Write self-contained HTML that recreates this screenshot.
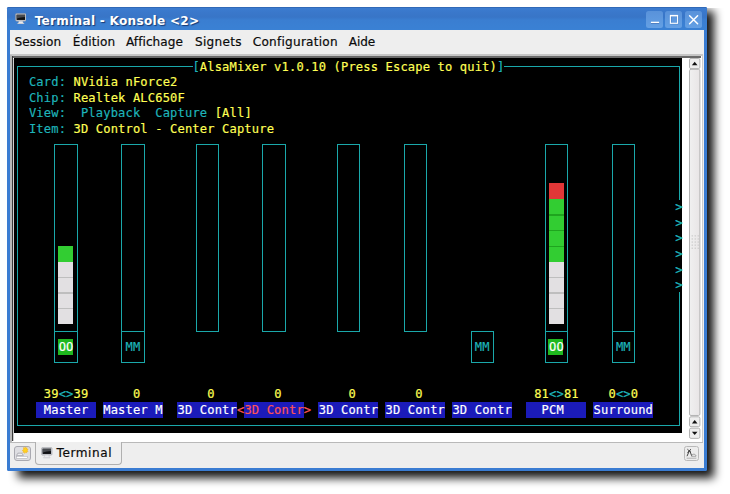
<!DOCTYPE html>
<html><head><meta charset="utf-8"><title>Terminal - Konsole</title>
<style>
html,body{margin:0;padding:0;background:#fff;}
body{width:730px;height:494px;position:relative;overflow:hidden;font-family:"DejaVu Sans","Liberation Sans",sans-serif;}
div,span,svg{position:absolute;}
#win{left:7.2px;top:7.2px;width:699.6px;height:463.5px;background:#3a7cd2;border-radius:1.5px;}
#title{left:7.2px;top:7.2px;width:699.6px;height:22.6px;background:linear-gradient(#2a5ea8 0,#3c7cd0 1.3px,#3a78cb 5px,#3875c7 10px,#3a7ed1 13px,#3a81d4 100%);border-radius:1.5px 1.5px 0 0;}
.tt{left:34.7px;top:12.7px;font-weight:bold;font-size:12.08px;color:#fff;text-shadow:1px 1px 1px rgba(0,10,50,.6);white-space:pre;line-height:16px;letter-spacing:0.28px}
.wb{top:10.9px;width:17px;height:17px;background:linear-gradient(#5992da,#64a0e4);border-radius:2.5px;}
#menu{left:10px;top:29.7px;width:693.6px;height:438.1px;background:#eeeeee;}
.mi span{top:33.7px;font-size:12.08px;color:#0a0a0a;-webkit-text-stroke:0.2px;line-height:16px;white-space:pre}
#black{left:14.04px;top:58.4px;width:668.4px;height:374.2px;background:#000;}
.ln{background:#1aa8aa;}
.t{font-family:"DejaVu Sans Mono","Liberation Mono",monospace;font-size:12.08px;letter-spacing:0.157px;line-height:15.61px;height:15.61px;white-space:pre;-webkit-text-stroke:0.18px;}
.blk{box-shadow:inset 0 -1px 0 rgba(0,0,0,.10);}
.sbb{left:689.3px;width:11.2px;background:#eeeeee;border:1px solid #b4b4b4;border-radius:2px;box-sizing:border-box;}
</style></head><body>
<div style="left:7.5px;top:7.5px;width:722.5px;height:486.5px;overflow:hidden"><div style="left:10.5px;top:3.5px;width:696px;height:467px;background:rgba(0,0,0,.92);filter:blur(5px)"></div></div>
<div id="win"></div>
<div id="title"></div>
<svg style="position:absolute;left:14.6px;top:12.8px" width="11.6" height="11.6" viewBox="0 0 22 22">
<rect x="1" y="1" width="20" height="14.5" rx="2" fill="#c9cbd0" stroke="#8d9097" stroke-width="0.8"/>
<rect x="3" y="3.2" width="16" height="10" fill="#101114"/>
<path d="M3 3.2h16v4.5c-5 .3-11 1.3-16 3z" fill="#5a5d63" opacity=".75"/>
<path d="M7.5 15.5h7l1.5 4.3h-10z" fill="#f2f2f4" stroke="#b4b6bc" stroke-width=".6"/>
<rect x="4.5" y="19.3" width="13" height="1.8" rx=".9" fill="#e3e4e8" stroke="#b4b6bc" stroke-width=".5"/>
</svg>
<span class="tt">Terminal - Konsole &lt;2&gt;</span>
<div class="wb" style="left:645.9px"></div><div class="wb" style="left:665.3px"></div><div class="wb" style="left:684.8px"></div>
<svg style="left:645.9px;top:10.9px" width="56" height="17" viewBox="0 0 56 17">
 <path d="M5 12.3h8.2" stroke="#1d4f9a" stroke-width="1.3" opacity=".55"/>
 <path d="M4.9 11.4h8.2" stroke="#fff" stroke-width="1.4"/>
 <rect x="24.9" y="5.2" width="7.2" height="7.6" fill="none" stroke="#1d4f9a" stroke-width="1" opacity=".45"/>
 <rect x="24.4" y="4.7" width="7.2" height="7.6" fill="none" stroke="#fff" stroke-width="1.1"/>
 <path d="M24 4.6h8" stroke="#fff" stroke-width="1.4"/>
 <path d="M43.6 4.8l8 8M51.6 4.8l-8 8" stroke="#fff" stroke-width="1.5" stroke-linecap="round"/>
</svg>
<div id="menu"></div>
<div class="mi"><span style="left:14.5px;letter-spacing:0.08px">Session</span><span style="left:72.8px;letter-spacing:0.1px">Édition</span><span style="left:125.9px;letter-spacing:0.08px">Affichage</span><span style="left:195.0px;letter-spacing:0.3px">Signets</span><span style="left:252.8px;letter-spacing:0.24px">Configuration</span><span style="left:348.8px;letter-spacing:-0.07px">Aide</span></div>
<!-- terminal frame -->
<div style="left:10px;top:54.1px;width:693.4px;height:2.1px;background:#c6c6c6"></div>
<div style="left:10px;top:55px;width:1.85px;height:386.6px;background:#b8b8b8"></div>
<div style="left:11.85px;top:56.2px;width:691px;height:385.6px;background:#fff"></div>
<div style="left:11.85px;top:56.2px;width:689px;height:2.2px;background:#6a6a6a"></div>
<div style="left:11.85px;top:56.2px;width:1.1px;height:384.6px;background:#3a3a3a"></div>
<div style="left:10px;top:441.6px;width:693.4px;height:1px;background:#b9b9b9"></div>
<div style="left:12.95px;top:58.7px;width:1.1px;height:382px;background:#cfcfcf"></div>
<div id="black"></div>
<!-- scrollbar -->
<svg style="left:688.3px;top:58.3px" width="13.4" height="382" viewBox="-1 0 13.4 382">
 <defs><linearGradient id="sg" x1="0" x2="1" y1="0" y2="0"><stop offset="0" stop-color="#f0f0f0"/><stop offset="1" stop-color="#e8e5e6"/></linearGradient></defs>
 <g stroke="#b2b2b2" stroke-width="1">
 <rect x="0.5" y="0.3" width="10.4" height="10.2" rx="1.5" fill="#eee"/>
 <rect x="0.5" y="11.2" width="10.4" height="346.4" rx="1.5" fill="url(#sg)"/>
 <rect x="0.5" y="358.9" width="10.4" height="9.9" rx="1.5" fill="#eee"/>
 <rect x="0.5" y="370.3" width="10.4" height="10.2" rx="1.5" fill="#eee"/>
 </g>
 <path d="M2.9 7.0l2.8-3.4 2.8 3.4z" fill="#111"/>
 <path d="M2.9 365.6l2.8-3.4 2.8 3.4z" fill="#111"/>
 <path d="M2.9 373.8l2.8 3.4 2.8-3.4z" fill="#111"/>
 <g fill="#cbcbcb"><rect x="2.6" y="177.2" width="1.3" height="1.3"/><rect x="5.6" y="177.2" width="1.3" height="1.3"/><rect x="8.6" y="177.2" width="1.3" height="1.3"/><rect x="2.6" y="180.3" width="1.3" height="1.3"/><rect x="5.6" y="180.3" width="1.3" height="1.3"/><rect x="8.6" y="180.3" width="1.3" height="1.3"/><rect x="2.6" y="183.4" width="1.3" height="1.3"/><rect x="5.6" y="183.4" width="1.3" height="1.3"/><rect x="8.6" y="183.4" width="1.3" height="1.3"/><rect x="2.6" y="186.5" width="1.3" height="1.3"/><rect x="5.6" y="186.5" width="1.3" height="1.3"/><rect x="8.6" y="186.5" width="1.3" height="1.3"/><rect x="2.6" y="189.6" width="1.3" height="1.3"/><rect x="5.6" y="189.6" width="1.3" height="1.3"/><rect x="8.6" y="189.6" width="1.3" height="1.3"/></g>
</svg>
<div style="left:702.2px;top:56.2px;width:0.9px;height:385.4px;background:#cdcdcd"></div>
<!-- tab bar -->
<div style="left:35.1px;top:441.6px;width:87px;height:23.6px;background:#efefef;border:1px solid #b0b0b0;border-top:none;border-radius:0 0 4px 4px;box-sizing:border-box"></div>
<div style="left:14.3px;top:446px;width:16.3px;height:14.8px;background:#dedee2;border:1px solid #a9a9b0;border-radius:3px;box-sizing:border-box"></div>
<svg style="left:14.3px;top:446px" width="16.3" height="14.8" viewBox="0 0 16.3 14.8">
 <g transform="translate(1.9,-0.3) scale(0.82)"><path d="M9.2 2.2l1.4 1 .6-1.8.9 1.7 1.6-.8-.4 1.8 1.8.3-1.4 1.2 1.2 1.4-1.8.1.2 1.8-1.6-1-.9 1.6-.7-1.7-1.7.6.8-1.6-1.5-1 1.7-.5z" fill="#ffd21f" stroke="#f2a90a" stroke-width=".5"/></g>
 <path d="M2.6 9.4l1.3-2.2h4l1.4 2.2z" fill="#f6f6f8" stroke="#8a8a92" stroke-width=".6"/>
 <rect x="2.6" y="10.6" width="10.6" height="1.6" fill="#fff" stroke="#a0a0a8" stroke-width=".4"/>
</svg>
<svg style="position:absolute;left:41.2px;top:447.2px" width="11.6" height="11.6" viewBox="0 0 22 22">
<rect x="1" y="1" width="20" height="14.5" rx="2" fill="#c9cbd0" stroke="#8d9097" stroke-width="0.8"/>
<rect x="3" y="3.2" width="16" height="10" fill="#101114"/>
<path d="M3 3.2h16v4.5c-5 .3-11 1.3-16 3z" fill="#5a5d63" opacity=".75"/>
<path d="M7.5 15.5h7l1.5 4.3h-10z" fill="#f2f2f4" stroke="#b4b6bc" stroke-width=".6"/>
<rect x="4.5" y="19.3" width="13" height="1.8" rx=".9" fill="#e3e4e8" stroke="#b4b6bc" stroke-width=".5"/>
</svg>
<span style="left:56.6px;top:445.4px;font-size:12.08px;letter-spacing:0.55px;color:#0a0a0a;-webkit-text-stroke:0.2px;line-height:16px;white-space:pre">Terminal</span>
<div style="left:684.4px;top:446.1px;width:15px;height:14.6px;background:#ececec;border:1px solid #b9b9b9;border-radius:2.5px;box-sizing:border-box"></div>
<svg style="left:684.4px;top:446.1px" width="15" height="14.6" viewBox="0 0 15 14.6">
 <path d="M3 10.2l2.6-6 2.2 6M3.4 3.2l3.6 3.4M7 3.2l-3.6 3.4" stroke="#444" stroke-width="1" fill="none"/>
 <path d="M7.6 10.2c0-2.6 4.4-2.6 4.4 0z" fill="#fff" stroke="#777" stroke-width=".7"/>
 <path d="M2.6 12.2h9.8" stroke="#999" stroke-width=".7"/>
</svg>
<div id="term">
<div class="ln" style="left:17.30px;top:65.91px;width:175.61px;height:1.0px"></div>
<div class="ln" style="left:503.96px;top:65.91px;width:175.61px;height:1.0px"></div>
<div class="ln" style="left:17.30px;top:424.94px;width:662.27px;height:1.0px"></div>
<div class="ln" style="left:17.30px;top:65.91px;width:1.0px;height:360.03px"></div>
<div class="ln" style="left:678.57px;top:65.91px;width:1.0px;height:133.69px"></div>
<div class="ln" style="left:678.57px;top:292.25px;width:1.0px;height:133.69px"></div>
<span class="t" style="left:675.35px;top:200.09px;color:#1eb4ba;">&gt;</span>
<span class="t" style="left:675.35px;top:215.70px;color:#1eb4ba;">&gt;</span>
<span class="t" style="left:675.35px;top:231.31px;color:#1eb4ba;">&gt;</span>
<span class="t" style="left:675.35px;top:246.92px;color:#1eb4ba;">&gt;</span>
<span class="t" style="left:675.35px;top:262.53px;color:#1eb4ba;">&gt;</span>
<span class="t" style="left:675.35px;top:278.14px;color:#1eb4ba;">&gt;</span>
<span class="t" style="left:192.40px;top:59.60px;color:#1eb4ba;">[</span>
<span class="t" style="left:199.83px;top:59.60px;color:#ffff54;">AlsaMixer v1.0.10 (Press Escape to quit)</span>
<span class="t" style="left:497.03px;top:59.60px;color:#1eb4ba;">]</span>
<span class="t" style="left:28.94px;top:75.21px;color:#1eb4ba;">Card:</span>
<span class="t" style="left:73.52px;top:75.21px;color:#ffff54;">NVidia nForce2</span>
<span class="t" style="left:28.94px;top:90.82px;color:#1eb4ba;">Chip:</span>
<span class="t" style="left:73.52px;top:90.82px;color:#ffff54;">Realtek ALC650F</span>
<span class="t" style="left:28.94px;top:106.43px;color:#1eb4ba;">View:</span>
<span class="t" style="left:80.95px;top:106.43px;color:#1eb4ba;">Playback</span>
<span class="t" style="left:155.25px;top:106.43px;color:#1eb4ba;">Capture</span>
<span class="t" style="left:214.69px;top:106.43px;color:#ffff54;">[All]</span>
<span class="t" style="left:28.94px;top:122.04px;color:#1eb4ba;">Item:</span>
<span class="t" style="left:73.52px;top:122.04px;color:#ffff54;">3D Control - Center Capture</span>
<div class="ln" style="left:54.44px;top:143.96px;width:23.29px;height:1.0px"></div>
<div class="ln" style="left:54.44px;top:143.96px;width:1.0px;height:188.32px"></div>
<div class="ln" style="left:76.73px;top:143.96px;width:1.0px;height:188.32px"></div>
<div class="ln" style="left:54.44px;top:331.28px;width:23.29px;height:1.0px"></div>
<div class="ln" style="left:54.44px;top:331.28px;width:23.29px;height:1.0px"></div>
<div class="ln" style="left:54.44px;top:331.28px;width:1.0px;height:31.75px"></div>
<div class="ln" style="left:76.73px;top:331.28px;width:1.0px;height:31.75px"></div>
<div class="ln" style="left:54.44px;top:362.03px;width:23.29px;height:1.0px"></div>
<div style="left:58.16px;top:245.92px;width:15.26px;height:15.66px;background:#32cd32"></div>
<div style="left:58.16px;top:261.53px;width:15.26px;height:15.66px;background:#e2e0e2"></div>
<div style="left:58.16px;top:277.14px;width:15.26px;height:15.66px;background:#e2e0e2"></div>
<div style="left:58.16px;top:276.74px;width:15.26px;height:1.4px;background:#bebebe"></div>
<div style="left:58.16px;top:292.75px;width:15.26px;height:15.66px;background:#e2e0e2"></div>
<div style="left:58.16px;top:292.35px;width:15.26px;height:1.4px;background:#bebebe"></div>
<div style="left:58.16px;top:308.36px;width:15.26px;height:15.66px;background:#e2e0e2"></div>
<div style="left:58.16px;top:307.96px;width:15.26px;height:1.4px;background:#bebebe"></div>
<div style="left:57.96px;top:338.98px;width:15.06px;height:15.91px;background:#1fb81f"></div>
<span class="t" style="left:58.66px;top:340.58px;color:#ffffff;margin-top:-0.5px">OO</span>
<span class="t" style="left:43.80px;top:387.41px;color:#ffff54;">39</span>
<span class="t" style="left:58.66px;top:387.41px;color:#1eb4ba;">&lt;&gt;</span>
<span class="t" style="left:73.52px;top:387.41px;color:#ffff54;">39</span>
<div style="left:35.97px;top:402.02px;width:59.74px;height:15.61px;background:#1b1bba"></div>
<span class="t" style="left:36.37px;top:403.02px;color:#ffffff;"> Master </span>
<div class="ln" style="left:121.31px;top:143.96px;width:23.29px;height:1.0px"></div>
<div class="ln" style="left:121.31px;top:143.96px;width:1.0px;height:188.32px"></div>
<div class="ln" style="left:143.61px;top:143.96px;width:1.0px;height:188.32px"></div>
<div class="ln" style="left:121.31px;top:331.28px;width:23.29px;height:1.0px"></div>
<div class="ln" style="left:121.31px;top:331.28px;width:23.29px;height:1.0px"></div>
<div class="ln" style="left:121.31px;top:331.28px;width:1.0px;height:31.75px"></div>
<div class="ln" style="left:143.61px;top:331.28px;width:1.0px;height:31.75px"></div>
<div class="ln" style="left:121.31px;top:362.03px;width:23.29px;height:1.0px"></div>
<span class="t" style="left:125.53px;top:340.58px;color:#1eb4ba;margin-top:-0.4px">MM</span>
<span class="t" style="left:132.96px;top:387.41px;color:#ffff54;">0</span>
<div style="left:102.84px;top:402.02px;width:59.74px;height:15.61px;background:#1b1bba"></div>
<span class="t" style="left:103.24px;top:403.02px;color:#ffffff;">Master M</span>
<div class="ln" style="left:195.62px;top:143.96px;width:23.29px;height:1.0px"></div>
<div class="ln" style="left:195.62px;top:143.96px;width:1.0px;height:188.32px"></div>
<div class="ln" style="left:217.91px;top:143.96px;width:1.0px;height:188.32px"></div>
<div class="ln" style="left:195.62px;top:331.28px;width:23.29px;height:1.0px"></div>
<span class="t" style="left:207.26px;top:387.41px;color:#ffff54;">0</span>
<div style="left:177.14px;top:402.02px;width:59.74px;height:15.61px;background:#1b1bba"></div>
<span class="t" style="left:177.54px;top:403.02px;color:#ffffff;">3D Contr</span>
<div class="ln" style="left:262.48px;top:143.96px;width:23.29px;height:1.0px"></div>
<div class="ln" style="left:262.48px;top:143.96px;width:1.0px;height:188.32px"></div>
<div class="ln" style="left:284.77px;top:143.96px;width:1.0px;height:188.32px"></div>
<div class="ln" style="left:262.48px;top:331.28px;width:23.29px;height:1.0px"></div>
<span class="t" style="left:274.13px;top:387.41px;color:#ffff54;">0</span>
<div style="left:244.01px;top:402.02px;width:59.74px;height:15.61px;background:#1b1bba"></div>
<span class="t" style="left:236.98px;top:403.02px;color:#ff5454;">&lt;</span>
<span class="t" style="left:244.41px;top:403.02px;color:#ff5454;">3D Contr</span>
<span class="t" style="left:303.85px;top:403.02px;color:#ff5454;">&gt;</span>
<div class="ln" style="left:336.78px;top:143.96px;width:23.29px;height:1.0px"></div>
<div class="ln" style="left:336.78px;top:143.96px;width:1.0px;height:188.32px"></div>
<div class="ln" style="left:359.07px;top:143.96px;width:1.0px;height:188.32px"></div>
<div class="ln" style="left:336.78px;top:331.28px;width:23.29px;height:1.0px"></div>
<span class="t" style="left:348.43px;top:387.41px;color:#ffff54;">0</span>
<div style="left:318.31px;top:402.02px;width:59.74px;height:15.61px;background:#1b1bba"></div>
<span class="t" style="left:318.71px;top:403.02px;color:#ffffff;">3D Contr</span>
<div class="ln" style="left:403.65px;top:143.96px;width:23.29px;height:1.0px"></div>
<div class="ln" style="left:403.65px;top:143.96px;width:1.0px;height:188.32px"></div>
<div class="ln" style="left:425.94px;top:143.96px;width:1.0px;height:188.32px"></div>
<div class="ln" style="left:403.65px;top:331.28px;width:23.29px;height:1.0px"></div>
<span class="t" style="left:415.30px;top:387.41px;color:#ffff54;">0</span>
<div style="left:385.18px;top:402.02px;width:59.74px;height:15.61px;background:#1b1bba"></div>
<span class="t" style="left:385.58px;top:403.02px;color:#ffffff;">3D Contr</span>
<div class="ln" style="left:470.52px;top:331.28px;width:23.29px;height:1.0px"></div>
<div class="ln" style="left:470.52px;top:331.28px;width:1.0px;height:31.75px"></div>
<div class="ln" style="left:492.81px;top:331.28px;width:1.0px;height:31.75px"></div>
<div class="ln" style="left:470.52px;top:362.03px;width:23.29px;height:1.0px"></div>
<span class="t" style="left:474.74px;top:340.58px;color:#1eb4ba;margin-top:-0.4px">MM</span>
<div style="left:452.05px;top:402.02px;width:59.74px;height:15.61px;background:#1b1bba"></div>
<span class="t" style="left:452.45px;top:403.02px;color:#ffffff;">3D Contr</span>
<div class="ln" style="left:544.83px;top:143.96px;width:23.29px;height:1.0px"></div>
<div class="ln" style="left:544.83px;top:143.96px;width:1.0px;height:188.32px"></div>
<div class="ln" style="left:567.12px;top:143.96px;width:1.0px;height:188.32px"></div>
<div class="ln" style="left:544.83px;top:331.28px;width:23.29px;height:1.0px"></div>
<div class="ln" style="left:544.83px;top:331.28px;width:23.29px;height:1.0px"></div>
<div class="ln" style="left:544.83px;top:331.28px;width:1.0px;height:31.75px"></div>
<div class="ln" style="left:567.12px;top:331.28px;width:1.0px;height:31.75px"></div>
<div class="ln" style="left:544.83px;top:362.03px;width:23.29px;height:1.0px"></div>
<div style="left:548.54px;top:183.48px;width:15.26px;height:15.66px;background:#e13737"></div>
<div style="left:548.54px;top:199.09px;width:15.26px;height:15.66px;background:#32cd32"></div>
<div style="left:548.54px;top:214.70px;width:15.26px;height:15.66px;background:#32cd32"></div>
<div style="left:548.54px;top:214.30px;width:15.26px;height:1.4px;background:#1fa51f"></div>
<div style="left:548.54px;top:230.31px;width:15.26px;height:15.66px;background:#32cd32"></div>
<div style="left:548.54px;top:229.91px;width:15.26px;height:1.4px;background:#1fa51f"></div>
<div style="left:548.54px;top:245.92px;width:15.26px;height:15.66px;background:#32cd32"></div>
<div style="left:548.54px;top:245.52px;width:15.26px;height:1.4px;background:#1fa51f"></div>
<div style="left:548.54px;top:261.53px;width:15.26px;height:15.66px;background:#e2e0e2"></div>
<div style="left:548.54px;top:277.14px;width:15.26px;height:15.66px;background:#e2e0e2"></div>
<div style="left:548.54px;top:276.74px;width:15.26px;height:1.4px;background:#bebebe"></div>
<div style="left:548.54px;top:292.75px;width:15.26px;height:15.66px;background:#e2e0e2"></div>
<div style="left:548.54px;top:292.35px;width:15.26px;height:1.4px;background:#bebebe"></div>
<div style="left:548.54px;top:308.36px;width:15.26px;height:15.66px;background:#e2e0e2"></div>
<div style="left:548.54px;top:307.96px;width:15.26px;height:1.4px;background:#bebebe"></div>
<div style="left:548.34px;top:338.98px;width:15.06px;height:15.91px;background:#1fb81f"></div>
<span class="t" style="left:549.04px;top:340.58px;color:#ffffff;margin-top:-0.5px">OO</span>
<span class="t" style="left:534.18px;top:387.41px;color:#ffff54;">81</span>
<span class="t" style="left:549.04px;top:387.41px;color:#1eb4ba;">&lt;&gt;</span>
<span class="t" style="left:563.90px;top:387.41px;color:#ffff54;">81</span>
<div style="left:526.35px;top:402.02px;width:59.74px;height:15.61px;background:#1b1bba"></div>
<span class="t" style="left:526.75px;top:403.02px;color:#ffffff;">  PCM   </span>
<div class="ln" style="left:611.70px;top:143.96px;width:23.29px;height:1.0px"></div>
<div class="ln" style="left:611.70px;top:143.96px;width:1.0px;height:188.32px"></div>
<div class="ln" style="left:633.99px;top:143.96px;width:1.0px;height:188.32px"></div>
<div class="ln" style="left:611.70px;top:331.28px;width:23.29px;height:1.0px"></div>
<div class="ln" style="left:611.70px;top:331.28px;width:23.29px;height:1.0px"></div>
<div class="ln" style="left:611.70px;top:331.28px;width:1.0px;height:31.75px"></div>
<div class="ln" style="left:633.99px;top:331.28px;width:1.0px;height:31.75px"></div>
<div class="ln" style="left:611.70px;top:362.03px;width:23.29px;height:1.0px"></div>
<span class="t" style="left:615.91px;top:340.58px;color:#1eb4ba;margin-top:-0.4px">MM</span>
<span class="t" style="left:608.48px;top:387.41px;color:#ffff54;">0</span>
<span class="t" style="left:615.91px;top:387.41px;color:#1eb4ba;">&lt;&gt;</span>
<span class="t" style="left:630.77px;top:387.41px;color:#ffff54;">0</span>
<div style="left:593.22px;top:402.02px;width:59.74px;height:15.61px;background:#1b1bba"></div>
<span class="t" style="left:593.62px;top:403.02px;color:#ffffff;">Surround</span>
</div>
</body></html>
